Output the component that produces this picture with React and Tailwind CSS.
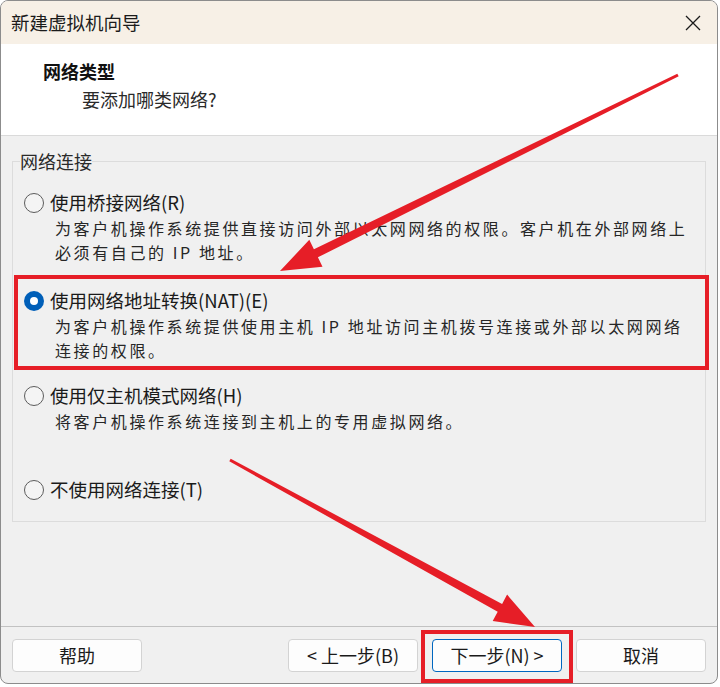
import React from 'react';

const font = { fontFamily: '"Noto Sans CJK SC", "Noto Sans", sans-serif' };

function Radio({ checked }) {
  if (checked) {
    return (
      <span className="w-5 h-5 rounded-full bg-[#005fb8] flex items-center justify-center flex-shrink-0">
        <span className="w-2 h-2 rounded-full bg-white" />
      </span>
    );
  }
  return <span className="w-5 h-5 rounded-full border border-[#5c5c5c] bg-[#f4f4f4] flex-shrink-0" />;
}

function Option({ checked, label, lines }) {
  return (
    <div>
      <div className="h-[26px] flex items-center gap-[6px] pl-[11px] text-[18.5px] text-[#1a1a1a]">
        <Radio checked={checked} />
        <span>{label}</span>
      </div>
      {lines.map((l) => (
        <div key={l} className="pl-[42px] text-[16px] leading-6 tracking-[2.6px] text-[#262626]">
          {l}
        </div>
      ))}
    </div>
  );
}

function Button({ children, primary }) {
  return (
    <button
      className={
        'w-[130px] h-[33px] rounded-[4px] bg-[#fdfdfd] text-[18px] text-[#1a1a1a] flex items-center justify-center border ' +
        (primary ? 'border-[#0067c0]' : 'border-[#d3d3d3]')
      }
    >
      {children}
    </button>
  );
}

export default function App() {
  return (
    <div className="relative w-[720px] h-[687px] bg-white overflow-hidden" style={font}>
      <div className="w-[718px] h-[684px] border border-[#8c8c8c] rounded-lg overflow-hidden flex flex-col bg-[#f0f0f0]">
        {/* Title bar */}
        <div className="h-[43px] bg-[#f7f0e6] flex items-center justify-between pl-[10px] pr-[16px] flex-shrink-0">
          <span className="text-[18.5px] text-[#1b1b1b]">新建虚拟机向导</span>
          <svg width="16" height="16" viewBox="0 0 16 16" className="text-[#1b1b1b]">
            <path d="M1 1 L15 15 M15 1 L1 15" stroke="currentColor" strokeWidth="1.3" fill="none" />
          </svg>
        </div>

        {/* Header */}
        <div className="h-[92px] bg-white border-b border-[#dadada] pt-[14px] flex-shrink-0">
          <div className="pl-[42px] text-[18px] font-bold leading-[26px] text-[#111]">网络类型</div>
          <div className="pl-[81px] mt-[2px] text-[18px] leading-[26px] text-[#2a2a2a]">要添加哪类网络?</div>
        </div>

        {/* Body */}
        <div className="flex-1 px-[11px] pt-[13px]">
          <fieldset className="border border-[#dcdcdc] pb-[18px]">
            <legend className="ml-[7px] text-[18px] leading-6 text-[#2a2a2a]">网络连接</legend>
            <div className="pt-[17px]">
              <Option
                label="使用桥接网络(R)"
                lines={['为客户机操作系统提供直接访问外部以太网网络的权限。客户机在外部网络上', '必须有自己的 IP 地址。']}
              />
              <div className="relative mt-[24px]">
                <Option
                  checked
                  label="使用网络地址转换(NAT)(E)"
                  lines={['为客户机操作系统提供使用主机 IP 地址访问主机拨号连接或外部以太网网络', '连接的权限。']}
                />
                <div className="absolute -top-[13px] -bottom-[8px] left-[1px] -right-[4px] border-[4px] border-[#e61e27]" />
              </div>
              <div className="mt-[21px]">
                <Option label="使用仅主机模式网络(H)" lines={['将客户机操作系统连接到主机上的专用虚拟网络。']} />
              </div>
              <div className="mt-[44px]">
                <Option label="不使用网络连接(T)" lines={[]} />
              </div>
            </div>
          </fieldset>
        </div>

        {/* Footer */}
        <div className="border-t border-[#c2c2c2] pt-[12px] pb-[11px] pl-[11px] pr-[11px] flex justify-between flex-shrink-0">
          <Button>帮助</Button>
          <div className="flex gap-[14px]">
            <Button>&lt; 上一步(B)</Button>
            <div className="relative">
              <Button primary>下一步(N) &gt;</Button>
              <div className="absolute -top-[9px] -bottom-[11px] -left-[11px] -right-[11px] border-[4px] border-[#e61e27]" />
            </div>
            <Button>取消</Button>
          </div>
        </div>
      </div>

      {/* Annotation arrows */}
      <svg className="absolute inset-0 pointer-events-none" width="720" height="687" viewBox="0 0 720 687">
        <polygon
          fill="#e61e27"
          points="678.7,76.3 317.9,257.3 322.5,266.8 280,271 309.3,239.8 313.9,249.3 677.3,73.7"
        />
        <polygon
          fill="#e61e27"
          points="229.3,461.3 497.7,611.8 492.7,621.0 535,627 507.1,594.6 502.1,603.9 230.7,458.7"
        />
      </svg>
    </div>
  );
}
